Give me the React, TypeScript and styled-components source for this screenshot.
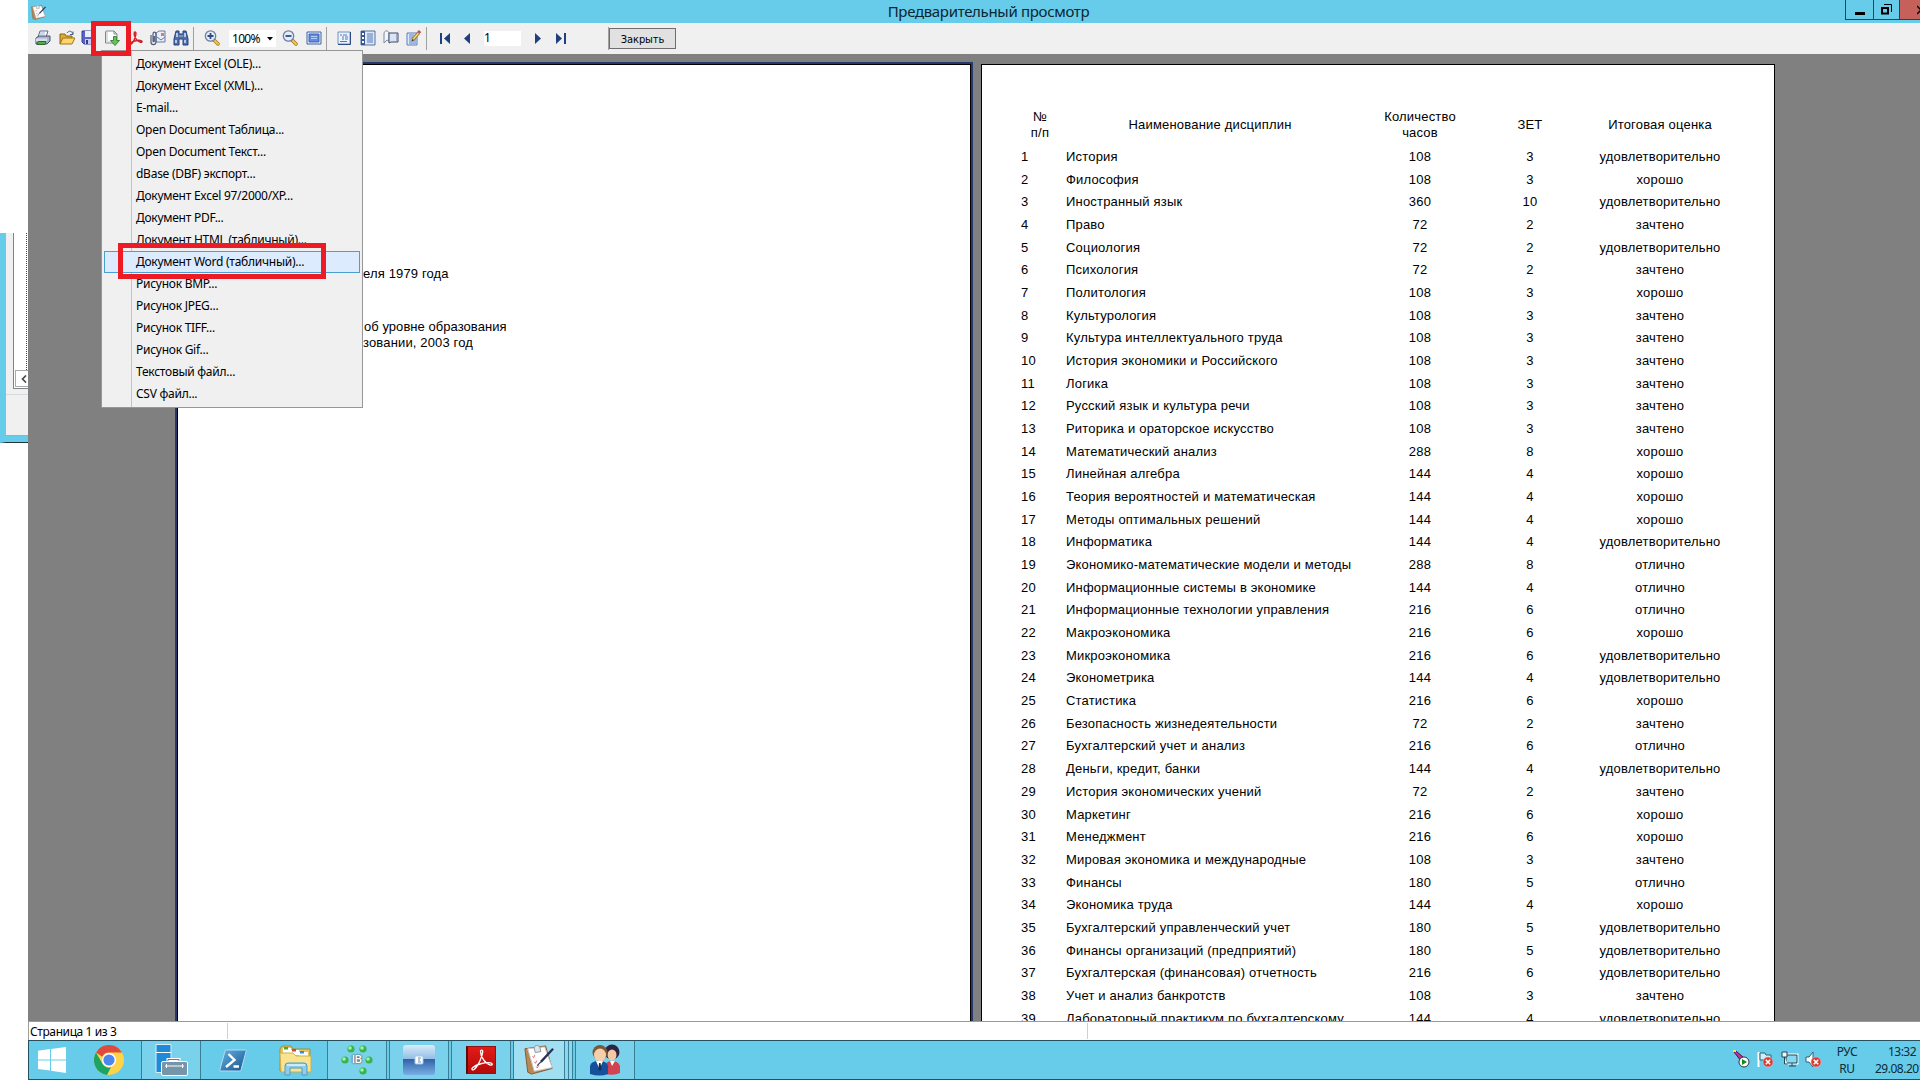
import React from "react";
import styled, { createGlobalStyle } from "styled-components";

const sky = "#67cbea";
const ui = '"Noto Sans", "Open Sans", sans-serif';

const Global = createGlobalStyle`
  * { box-sizing: border-box; }
  html, body { margin: 0; padding: 0; background: #fff; overflow: hidden; }
`;

const Screen = styled.div`
  position: relative;
  display: flex;
  width: 1920px;
  height: 1080px;
  overflow: hidden;
  background: #fff;
  color: #000;
  font-family: ${ui};
`;

/* ---------- sliver of the window behind ---------- */
const BackStrip = styled.div`
  width: 28px;
  padding-top: 233px;
  flex: none;
`;
const BackWindow = styled.div`
  height: 210px;
  border-left: 6px solid ${sky};
  border-bottom: 1px solid #24343c;
  background: #f0f0f0;
  display: flex;
  flex-direction: column;
  overflow: hidden;
`;
const BackList = styled.div`
  height: 156px;
  margin-left: 7px;
  border-left: 1px solid #7f8288;
  border-bottom: 1px solid #7f8288;
  background: #fff;
  display: flex;
  flex-direction: column;
`;
const BackDots = styled.div`
  flex: 1;
  width: 13px;
  border-right: 1px dotted #444;
`;
const BackScroll = styled.div`
  height: 17px;
  margin: 0 0 1px 1px;
  border: 1px solid #aaa;
  border-right: 0;
  display: flex;
  align-items: center;
  justify-content: flex-end;
  padding-right: 1px;
`;
const BackGroup = styled.div`
  height: 6px;
  border-bottom: 1px solid #d5dade;
`;
const BackFooter = styled.div`
  margin-top: auto;
  height: 7px;
  background: ${sky};
  border-top: 1px solid #8fb5c4;
`;

/* ---------- main window ---------- */
const Main = styled.div`
  width: 1892px;
  display: flex;
  flex-direction: column;
`;
const TitleBar = styled.div`
  height: 23px;
  background: ${sky};
  display: flex;
  justify-content: space-between;
`;
const TitleIcon = styled.div`
  width: 90px;
  padding: 3px 0 0 3px;
`;
const Title = styled.div`
  flex: 1;
  padding-left: 14px;
  text-align: center;
  font-size: 15px;
  line-height: 23px;
  letter-spacing: -0.32px;
  color: #0b2630;
`;
const WinButtons = styled.div`
  display: flex;
  width: 75px;
  height: 20px;
`;
const WinButton = styled.div<{ $w: number; $close?: boolean }>`
  width: ${(p) => p.$w}px;
  border: 1px solid #214552;
  border-top: 0;
  border-right: 0;
  background: ${(p) => (p.$close ? "#c6605a" : "transparent")};
  display: flex;
  align-items: center;
  justify-content: ${(p) => (p.$close ? "flex-end" : "center")};
  overflow: hidden;
`;

const Toolbar = styled.div`
  height: 31px;
  padding-left: 2px;
  background: #f0f0f0;
  display: flex;
  align-items: center;
`;
const Tool = styled.div<{ $w: number; $ml?: number }>`
  width: ${(p) => p.$w}px;
  margin-left: ${(p) => p.$ml ?? 0}px;
  height: 31px;
  padding-bottom: 1px;
  display: flex;
  align-items: center;
  justify-content: center;
  flex: none;
`;
const Sep = styled.div<{ $ml?: number }>`
  width: 1px;
  height: 23px;
  margin-left: ${(p) => p.$ml ?? 0}px;
  background: #a0a0a0;
`;
const Combo = styled.div`
  width: 47px;
  height: 17px;
  background: #fff;
  display: flex;
  align-items: center;
  justify-content: space-between;
  padding: 1px 3px 0 3px;
  font-size: 12px;
  line-height: 16px;
  letter-spacing: -0.7px;
`;
const Field = styled.div`
  width: 37px;
  height: 15px;
  margin-left: 6px;
  background: #fff;
  font-size: 12px;
  line-height: 14px;
`;
const CloseButton = styled.div`
  width: 67px;
  height: 21px;
  border: 1px solid #6e6e6e;
  background: #e1e1e1;
  text-align: center;
  font-family: "DejaVu Sans Condensed", "DejaVu Sans", sans-serif;
  font-size: 11px;
  line-height: 21px;
  letter-spacing: -0.1px;
`;

/* ---------- preview area ---------- */
const Canvas = styled.div`
  height: 967px;
  overflow: hidden;
  background: #808080;
  display: flex;
  align-items: flex-start;
  padding: 8px 0 0 147px;
`;
const ActivePage = styled.div`
  width: 798px;
  height: 1130px;
  border: 2px solid #26396b;
  flex: none;
`;
const Paper = styled.div`
  width: 794px;
  height: 1123px;
  border: 1px solid #000;
  background: #fff;
  font-family: "Liberation Sans", Arial, sans-serif;
  font-size: 13px;
  line-height: 16px;
  letter-spacing: 0.3px;
  flex: none;
`;
const FirstPaper = styled(Paper)`
  padding: 201px 0 0 185px;
`;
const Line = styled.div<{ $mb?: number; $ml?: number; $ls?: number }>`
  margin: 0 0 ${(p) => p.$mb ?? 0}px ${(p) => p.$ml ?? 0}px;
  letter-spacing: ${(p) => p.$ls ?? 0.15}px;
  white-space: nowrap;
`;
const SecondPaper = styled(Paper)`
  margin: 2px 0 0 8px;
  padding: 43px 0 0 39px;
`;
const Row = styled.div<{ $head?: boolean }>`
  display: grid;
  grid-template-columns: 38px 302px 118px 102px 158px;
  align-items: center;
  height: ${(p) => (p.$head ? 33 : 22.68)}px;
  margin-bottom: ${(p) => (p.$head ? 4.7 : 0)}px;
  white-space: pre-line;
`;
const Cell = styled.div<{ $left?: boolean; $pad?: number; $ls?: number }>`
  text-align: ${(p) => (p.$left ? "left" : "center")};
  padding-left: ${(p) => p.$pad ?? 0}px;
  letter-spacing: ${(p) => p.$ls ?? 0.19}px;
`;

const StatusBar = styled.div`
  height: 19px;
  border-top: 1px solid #9a9a9a;
  border-left: 1px solid #a0a0a0;
  background: #fff;
  display: flex;
  font-size: 12px;
  line-height: 20px;
`;
const StatusCell = styled.div<{ $w: number }>`
  width: ${(p) => p.$w}px;
  margin: 1px 0 0;
  height: 16px;
  padding-left: 1px;
  line-height: 18px;
  border-right: 1px solid #d0d0d0;
  letter-spacing: -0.4px;
`;

/* ---------- taskbar ---------- */
const Taskbar = styled.div`
  height: 40px;
  border: 1px solid #27505e;
  border-right: 0;
  background: ${sky};
  display: flex;
`;
const Task = styled.div<{ $w: number; $ml?: number; $state?: "open" | "active" }>`
  width: ${(p) => p.$w}px;
  margin-left: ${(p) => p.$ml ?? 0}px;
  display: flex;
  align-items: center;
  justify-content: center;
  border: solid #3c7e94;
  border-width: ${(p) => (p.$state ? "0 1px" : "0")};
  background: ${(p) =>
    p.$state === "active" ? "#a0def2" : p.$state === "open" ? "#79d1ec" : "transparent"};
`;
const Stack = styled.div<{ $w: number }>`
  width: ${(p) => p.$w}px;
  border-right: 1px solid #3c7e94;
  background: #8ad7ef;
`;
const Tray = styled.div`
  margin-left: auto;
  display: flex;
  align-items: center;
  color: #0c2c38;
  font-size: 12px;
`;
const TrayIcon = styled.div`
  width: 24px;
  height: 20px;
`;
const TrayText = styled.div<{ $w: number; $ml?: number; $ls: number }>`
  width: ${(p) => p.$w}px;
  margin-left: ${(p) => p.$ml ?? 0}px;
  line-height: 17px;
  white-space: nowrap;
  text-align: center;
  letter-spacing: ${(p) => p.$ls}px;
  overflow: hidden;
`;
const Clock = styled.div`
  padding-left: 9px;
`;
const DateText = styled.div`
  text-align: left;
`;

/* ---------- overlays ---------- */
const Menu = styled.div`
  position: absolute;
  left: 101px;
  top: 50px;
  width: 262px;
  height: 358px;
  padding: 2px;
  border: 1px solid #979797;
  background: linear-gradient(90deg, transparent 29px, #c4c4c4 29px, #c4c4c4 30px, transparent 30px) #f0f0f0;
`;
const MenuItem = styled.div<{ $on?: boolean }>`
  height: 22px;
  padding-left: 31px;
  border: 1px solid ${(p) => (p.$on ? "#4a9fd0" : "transparent")};
  background: ${(p) => (p.$on ? "#dcebfd" : "transparent")};
  font-size: 12px;
  line-height: 19px;
  letter-spacing: -0.26px;
  white-space: nowrap;
`;
const Mark = styled.div<{ $x: number; $y: number; $w: number; $h: number }>`
  position: absolute;
  left: ${(p) => p.$x}px;
  top: ${(p) => p.$y}px;
  width: ${(p) => p.$w}px;
  height: ${(p) => p.$h}px;
  border: 5px solid #ed1c24;
`;

/* ---------- icons ---------- */
const I = ({ s = 16, h, children }: { s?: number; h?: number; children: React.ReactNode }) => (
  <svg width={s} height={h ?? s} viewBox={`0 0 ${s} ${h ?? s}`}>{children}</svg>
);
const Printer = () => (
  <I><path d="M5 1h8l-2 6H3z" fill="#fff" stroke="#5b6b8c" /><path d="M1 8l3-2h11v5l-3 3H1z" fill="#a9b6cb" stroke="#44526e" /><path d="M1 8.500h11v3H1z" fill="#d8dfea" /><path d="M3 11.500h8l-1 3H2z" fill="#4fae49" stroke="#34672f" /><path d="M5 3h5M4.500 5h5" stroke="#9db0d4" /></I>
);
const Folder = () => (
  <I><path d="M1 14V4h5l1 2h6v3" fill="#e0a935" stroke="#8c6414" /><path d="M1 14l3-6h12l-3 6z" fill="#fbd768" stroke="#9c7420" /><path d="M8 3c2-3 5-2 6 1M14 4.500V1.500M14 4.500h-3" fill="none" stroke="#44628f" /></I>
);
const Floppy = () => (
  <I><path d="M1 1h13v13H3l-2-2z" fill="#5a62c8" stroke="#373c91" /><path d="M4 1h8v6H4z" fill="#e9ecfa" /><path d="M4 9h8v5H4z" fill="#c6cbea" /><path d="M5 10h2v4H5z" fill="#373c91" /></I>
);
const ExportIcon = () => (
  <I><path d="M2 1h8l3 3v9H1.500V2z" fill="#fff" stroke="#7c8796" /><path d="M3 1v10M2 12h8" stroke="#b6bec9" /><path d="M10 1v3h3" fill="none" stroke="#7c8796" /><path d="M9.500 6.500h3v4h3L11 15.500 6.500 10.500h3z" fill="#6cbf5a" stroke="#3d8b3a" /></I>
);
const Pdf = ({ s = 15, c = "#d4232b" }: { s?: number; c?: string }) => (
  <svg width={s} height={s} viewBox="0 0 24 24" fill="none" stroke={c} strokeWidth={s < 20 ? 2.4 : 1.4}>
    <path d="M10.500 2c2-1 2.500 1 1.800 4.500C11 13 7 20 3.500 22c-2 .7-2-1.500 1-3.500 4-2.500 12-4.500 16.500-3 3 1.300 1 3-2 2.200C14 16 9.500 9 10 4z" />
  </svg>
);
const Mail = () => (
  <I><path d="M6 3l3-2h6v11H6z" fill="#e8eef8" stroke="#637ba6" /><path d="M7 7l4 3 4-3" fill="none" stroke="#637ba6" /><path d="M11 3h3v3h-3z" fill="#e17a62" /><path d="M1 5v7c0 3.500 5 3.500 5 0V4c0-2.500-3-2.500-3 0v7c0 1 1.300 1 1.300 0V6" fill="none" stroke="#4c5c7a" strokeWidth="1.200" /></I>
);
const Binoculars = () => (
  <I><path d="M3 1h3v3h4V1h3l2 8v6h-5V9H6v6H1V9z" fill="#4e6ea9" stroke="#27427a" /><path d="M4 3v4M12 3v4M3 10v3M12 10v3" stroke="#dbe6fa" strokeWidth="1.500" /><path d="M6 6h4" stroke="#9fb8e2" /></I>
);
const Lens = ({ plus }: { plus?: boolean }) => (
  <I><path d="M10 10l4 4" stroke="#a87c20" strokeWidth="3.500" strokeLinecap="round" /><path d="M10 10l4 4" stroke="#f0ca54" strokeWidth="1.800" strokeLinecap="round" /><circle cx="6.500" cy="6" r="5.200" fill="#e3edf9" stroke="#6f7f9c" strokeWidth="1.300" /><path d={plus ? "M3.500 6h6M6.500 3v6" : "M3.500 6h6"} stroke="#2f4c86" strokeWidth="1.800" /></I>
);
const FullPage = () => (
  <I><path d="M1 2h14v12H1z" fill="#f2f7ff" stroke="#3e5f9e" /><path d="M3 4h10v8H3z" fill="#5f8ce0" stroke="#3a62b4" /><path d="M5 6.500h6M5 8.500h6" stroke="#b7cff8" /></I>
);
const Outline = () => (
  <I><path d="M2 2h12v12H2z" fill="#eaf2ff" stroke="#7990b8" /><path d="M14.500 2v12.500H2" fill="none" stroke="#2d4b85" /><path d="M4 5h2M7 5h4M6 7h2M9 7h3M6 9h2M9 9h3M4 11.500h7" stroke="#5778b4" /></I>
);
const Thumbs = () => (
  <I><path d="M1 1h14v14H1z" fill="#dbe7fb" stroke="#54719f" /><path d="M1 1h4v14H1z" fill="#36568f" /><path d="M2 3h2v2H2zM2 7h2v2H2zM2 11h2v2H2z" fill="#fff" /><path d="M7 4h6M7 6h6M7 8h6M7 10h6M7 12h6" stroke="#5778b4" /></I>
);
const Book = () => (
  <I><path d="M1 13V4c0-4 4-4 5-1v8l-2-1z" fill="#f4f6fa" stroke="#7c889c" /><path d="M6 3h9v9H8l-2 1z" fill="#dbe4f2" stroke="#3b4b69" /><path d="M14 4v7" stroke="#8799b8" strokeWidth="1.500" /></I>
);
const Edit = () => (
  <I><path d="M1 3h10v12H1z" fill="#dfeafa" stroke="#5f7fb6" /><path d="M3 5h5M3 7h4M3 9h7M3 11h7M3 13h7" stroke="#5b83c8" /><path d="M7 9.500L12.500 3" stroke="#8a6a24" strokeWidth="3.400" /><path d="M7 9.500L12.500 3" stroke="#f2d377" strokeWidth="1.800" /><path d="M12.300 3l1.700-2" stroke="#c44f5f" strokeWidth="3.200" /><path d="M5.500 11.500l1-2.500 1.600 1.300z" fill="#333" /></I>
);
const Arrow = ({ dir, bar }: { dir: "l" | "r"; bar?: boolean }) => (
  <svg width="12" height="11" viewBox="0 0 12 11" fill="#1f3f7d" style={{ transform: dir === "r" ? "scaleX(-1)" : undefined }}>
    {bar && <path d="M1 0h2v11H1z" />}
    <path d={bar ? "M11 0v11L5 5.500z" : "M9 0v11L3 5.500z"} />
  </svg>
);
const Clip = ({ s }: { s: number }) => (
  <svg width={s} height={s} viewBox="0 0 32 32">
    <path d="M1 4l22-3 7 24-22 6-4-2z" fill="#b88855" stroke="#80592f" />
    <path d="M4 4l18-2 8 22-19 4z" fill="#fff" stroke="#c8cbd2" />
    <path d="M11 4c-1-4 5-5 6-1l1 4-6 1z" fill="#dfe5ea" stroke="#87939d" />
    <path d="M9 12l1.200 1.500 1.500-3M11 18l1.200 1.500 1.500-3M13 23l1.200 1.500 1.500-3" fill="none" stroke="#e0666a" strokeWidth="1" />
    <path d="M31 4L18 18" stroke="#263154" strokeWidth="2.400" /><path d="M18 18l-4 4" stroke="#263154" strokeWidth="1.200" />
  </svg>
);
const Windows = () => (
  <svg width="28" height="26" viewBox="0 0 28 26" fill="#fff"><path d="M0 3.700l12-1.600v10.300H0zM13 1.900L28 0v12.400H13zM0 13.400h12v10.200L0 22zM13 13.400h15V26l-15-2.200z" /></svg>
);
const Chrome = () => (
  <svg width="30" height="30" viewBox="0 0 30 30">
    <circle cx="15" cy="15" r="15" fill="#fdd349" />
    <path d="M2 7.500A15 15 0 0 1 28 7.500H15a7.500 7.500 0 0 0-6.800 4.300z" fill="#dd4b3e" />
    <path d="M2 7.500l6.500 11.300a7.500 7.500 0 0 0 8.400 3.500L13 30A15 15 0 0 1 2 7.500z" fill="#1da362" />
    <circle cx="15" cy="15" r="7" fill="#fff" /><circle cx="15" cy="15" r="5.600" fill="#4a87ee" />
  </svg>
);
const Server = () => (
  <svg width="33" height="32" viewBox="0 0 33 32">
    <path d="M1 .5h15v28H1z" fill="#1e8ad8" stroke="#d5effa" /><path d="M1 8.500h15" stroke="#fff" />
    <path d="M13 18v-2.500h11V18" fill="none" stroke="#fff" strokeWidth="3" /><path d="M13 18v-2.500h11V18" fill="none" stroke="#5d7f93" />
    <rect x="6.500" y="17.500" width="26" height="14" rx="1.500" fill="#7795a8" stroke="#fff" /><path d="M10 22h19M11.500 20v4M27.500 20v4" stroke="#fff" />
  </svg>
);
const PowerShell = () => (
  <svg width="28" height="23" viewBox="0 0 28 23">
    <defs><linearGradient id="ps" x1="0" y1="0" x2="1" y2="1"><stop offset="0" stopColor="#67b2e2" /><stop offset="1" stopColor="#14548e" /></linearGradient></defs>
    <path d="M7 1h19.500q1 0 .7 1L22 21q-.3 1-1 1H1.500q-1 0-.7-1L6 2q.3-1 1-1z" fill="url(#ps)" stroke="#b4dcf1" />
    <path d="M9.500 5l6 6-8.500 7M14.500 17.500h5.500" fill="none" stroke="#fff" strokeWidth="2.400" />
  </svg>
);
const Explorer = () => (
  <svg width="34" height="31" viewBox="0 0 34 31">
    <path d="M1 4l2-3h9l2 3h17v22H1z" fill="#e5c55c" stroke="#ab8930" />
    <path d="M4 3h8v5H4z" fill="#fff" /><path d="M5 2h4v2.500H5z" fill="#47a83a" /><path d="M12 5h8v5h-8z" fill="#fff" /><path d="M13 4h4v2.500h-4z" fill="#cf4a35" /><path d="M20 7h9v4h-9z" fill="#fff" /><path d="M21 6h4v2.500h-4z" fill="#3a8ed0" />
    <path d="M1 8h13l3 3h15v16H2z" fill="#f8e38f" stroke="#cfae4d" />
    <path d="M6 30V21q0-3 3-3h16q3 0 3 3v9h-5v-7H11v7z" fill="#8fcdec" stroke="#4f9cc4" /><path d="M8 20h18" stroke="#e1f5fd" strokeWidth="1.500" />
  </svg>
);
const IbBox = styled.div`
  position: relative;
  width: 32px;
  height: 30px;
  display: flex;
  align-items: center;
  justify-content: center;
  font: bold 10px/30px "Liberation Sans", Arial, sans-serif;
  color: #fff;
  text-shadow: 0 0 1px #345, 0 0 2px #345;
  svg { position: absolute; inset: 0; }
`;
const Ib = () => (
  <IbBox>
    <svg width="32" height="30" viewBox="0 0 32 30">
      {[[10, 4], [22, 4], [4, 15], [28, 15], [22, 26]].map(([x, y]) => (
        <g key={`${x}-${y}`}><circle cx={x} cy={y} r="3.600" fill="#35b54a" /><circle cx={x - 1} cy={y - 1} r="1.800" fill="#a5efaa" /></g>
      ))}
    </svg>
    IB
  </IbBox>
);
const Drawer = () => (
  <svg width="32" height="30" viewBox="0 0 32 30">
    <defs>
      <linearGradient id="da" x1="0" y1="0" x2="0" y2="1"><stop offset="0" stopColor="#d9ecfa" /><stop offset="1" stopColor="#92bde4" /></linearGradient>
      <linearGradient id="db" x1="0" y1="0" x2="0" y2="1"><stop offset="0" stopColor="#2f62a8" /><stop offset="1" stopColor="#78aee4" /></linearGradient>
    </defs>
    <path d="M0 14V3q0-3 3-3h26q3 0 3 3v11z" fill="url(#da)" /><path d="M0 14h32v13q0 3-3 3H3q-3 0-3-3z" fill="url(#db)" />
    <rect x="12" y="11" width="8" height="8" rx="1" fill="#fff" stroke="#a8c6e4" /><path d="M15 13h3M15 15h2M15 17h3" stroke="#5d93cd" />
  </svg>
);
const AcroBox = styled.div`
  width: 30px;
  height: 28px;
  border: 1px solid #8f1210;
  border-left: 2px solid #5c0b09;
  background: linear-gradient(#e31b16, #b30b0b);
  display: flex;
  align-items: center;
  justify-content: center;
`;
const Acrobat = () => (
  <svg width="24" height="24" viewBox="0 0 24 24" fill="none" stroke="#fff" strokeWidth="1.300">
    <path d="M10.500 3.500c0-2 2.500-2 2.200.5C12.200 9 8 18.500 4 21.500c-1.500 1-3-.3-1.500-1.800C6 16.500 15 14 20.500 14.800c2.500.4 2.200 2.600 0 2.300C15.500 16 10.500 9 10.500 3.500z" />
  </svg>
);
const Users = () => (
  <svg width="30" height="32" viewBox="0 0 30 32">
    <circle cx="22" cy="8" r="7.500" fill="#2d2440" /><ellipse cx="22" cy="11" rx="4.500" ry="5.500" fill="#f2c9a4" />
    <path d="M15 30V22q1-5 7-5t8 5v7q-6 3-15 1z" fill="#d34250" /><path d="M20 17l2 5 3-5z" fill="#fff" />
    <circle cx="10" cy="8.500" r="7.500" fill="#7a5838" /><ellipse cx="10" cy="11" rx="6" ry="6.500" fill="#f5cfa9" />
    <path d="M0 30v-8q1-5 9-5t9 5v8q-8 3-18 0z" fill="#17509a" /><path d="M6 17l3.500 8 3.500-8z" fill="#fff" /><path d="M9 19l1.500 0 1 6-1.500 2-1.500-2z" fill="#1b2b52" />
  </svg>
);
const Cross = ({ x, y }: { x: number; y: number }) => (
  <g><circle cx={x} cy={y} r="5" fill="#d93a34" stroke="#f4b0aa" strokeWidth=".6" /><path d={`M${x - 2.2} ${y - 2.2}l4.400 4.400M${x + 2.2} ${y - 2.2}l-4.400 4.400`} stroke="#fff" strokeWidth="1.600" /></g>
);

const exportFormats = [
  "Документ Excel (OLE)...", "Документ Excel (XML)...", "E-mail...", "Open Document Таблица...",
  "Open Document Текст...", "dBase (DBF) экспорт...", "Документ Excel 97/2000/XP...", "Документ PDF...",
  "Документ HTML (табличный)...", "Документ Word (табличный)...", "Рисунок BMP...", "Рисунок JPEG...",
  "Рисунок TIFF...", "Рисунок Gif...", "Текстовый файл...", "CSV файл...",
];

const U = "удовлетворительно", X = "хорошо", Z = "зачтено", O = "отлично";
const subjects: [string, number, number, string][] = [
  ["История", 108, 3, U], ["Философия", 108, 3, X], ["Иностранный язык", 360, 10, U], ["Право", 72, 2, Z],
  ["Социология", 72, 2, U], ["Психология", 72, 2, Z], ["Политология", 108, 3, X], ["Культурология", 108, 3, Z],
  ["Культура интеллектуального труда", 108, 3, Z], ["История экономики и Российского", 108, 3, Z],
  ["Логика", 108, 3, Z], ["Русский язык и культура речи", 108, 3, Z], ["Риторика и ораторское искусство", 108, 3, Z],
  ["Математический анализ", 288, 8, X], ["Линейная алгебра", 144, 4, X],
  ["Теория вероятностей и математическая", 144, 4, X], ["Методы оптимальных решений", 144, 4, X],
  ["Информатика", 144, 4, U], ["Экономико-математические модели и методы", 288, 8, O],
  ["Информационные системы в экономике", 144, 4, O], ["Информационные технологии управления", 216, 6, O],
  ["Макроэкономика", 216, 6, X], ["Микроэкономика", 216, 6, U], ["Эконометрика", 144, 4, U],
  ["Статистика", 216, 6, X], ["Безопасность жизнедеятельности", 72, 2, Z], ["Бухгалтерский учет и анализ", 216, 6, O],
  ["Деньги, кредит, банки", 144, 4, U], ["История экономических учений", 72, 2, Z], ["Маркетинг", 216, 6, X],
  ["Менеджмент", 216, 6, X], ["Мировая экономика и международные", 108, 3, Z], ["Финансы", 180, 5, O],
  ["Экономика труда", 144, 4, X], ["Бухгалтерский управленческий учет", 180, 5, U],
  ["Финансы организаций (предприятий)", 180, 5, U], ["Бухгалтерская (финансовая) отчетность", 216, 6, U],
  ["Учет и анализ банкротств", 108, 3, Z], ["Лабораторный практикум по бухгалтерскому", 144, 4, U],
];

export default function App() {
  return (
    <Screen>
      <Global />
      <BackStrip>
        <BackWindow>
          <BackList>
            <BackDots />
            <BackScroll>
              <svg width="6" height="8" viewBox="0 0 6 8"><path d="M5 .5L1.500 4 5 7.500" fill="none" stroke="#444" strokeWidth="1.600" /></svg>
            </BackScroll>
          </BackList>
          <BackGroup />
          <BackFooter />
        </BackWindow>
      </BackStrip>

      <Main>
        <TitleBar>
          <TitleIcon><Clip s={15} /></TitleIcon>
          <Title>Предварительный просмотр</Title>
          <WinButtons>
            <WinButton $w={28}><svg width="10" height="16" viewBox="0 0 10 16"><path d="M0 10h10v3H0z" /></svg></WinButton>
            <WinButton $w={26}>
              <svg width="11" height="11" viewBox="0 0 11 11" fill="none" stroke="#000"><path d="M1 4h6v5.500H1z" strokeWidth="2" /><path d="M3 .5h7.500V8" /></svg>
            </WinButton>
            <WinButton $w={21} $close><svg width="3" height="10" viewBox="0 0 3 10"><path d="M0 1l4 4-4 4" fill="none" stroke="#000" strokeWidth="1.500" /></svg></WinButton>
          </WinButtons>
        </TitleBar>

        <Toolbar>
          <Tool $w={25}><Printer /></Tool>
          <Tool $w={23}><Folder /></Tool>
          <Tool $w={22}><Floppy /></Tool>
          <Tool $w={24}><ExportIcon /></Tool>
          <Tool $w={23}><Pdf /></Tool>
          <Tool $w={22}><Mail /></Tool>
          <Tool $w={23}><Binoculars /></Tool>
          <Sep $ml={1} />
          <Tool $w={35}><Lens plus /></Tool>
          <Combo>100%<svg width="6" height="4" viewBox="0 0 6 4"><path d="M0 0h6L3 3.500z" /></svg></Combo>
          <Tool $w={27}><Lens /></Tool>
          <Tool $w={21}><FullPage /></Tool>
          <Sep $ml={2} />
          <Tool $w={24} $ml={5}><Outline /></Tool>
          <Tool $w={23}><Thumbs /></Tool>
          <Tool $w={24}><Book /></Tool>
          <Tool $w={22}><Edit /></Tool>
          <Sep $ml={1} />
          <Tool $w={22} $ml={7}><Arrow dir="l" bar /></Tool>
          <Tool $w={22}><Arrow dir="l" /></Tool>
          <Field>1</Field>
          <Tool $w={22} $ml={6}><Arrow dir="r" /></Tool>
          <Tool $w={24}><Arrow dir="r" bar /></Tool>
          <Sep $ml={35} />
          <CloseButton>Закрыть</CloseButton>
        </Toolbar>

        <Canvas>
          <ActivePage>
            <FirstPaper>
              <Line $mb={37}>еля 1979 года</Line>
              <Line $ml={1} $ls={0.05}>об уровне образования</Line>
              <Line>зовании, 2003 год</Line>
            </FirstPaper>
          </ActivePage>
          <SecondPaper>
            <Row $head>
              <Cell>{"№\nп/п"}</Cell>
              <Cell>Наименование дисциплин</Cell>
              <Cell>{"Количество\nчасов"}</Cell>
              <Cell>ЗЕТ</Cell>
              <Cell>Итоговая оценка</Cell>
            </Row>
            {subjects.map(([name, hours, zet, grade], i) => (
              <Row key={name}>
                <Cell $left>{i + 1}</Cell>
                <Cell $left $pad={7}>{name}</Cell>
                <Cell>{hours}</Cell>
                <Cell>{zet}</Cell>
                <Cell>{grade}</Cell>
              </Row>
            ))}
          </SecondPaper>
        </Canvas>

        <StatusBar>
          <StatusCell $w={199}>Страница 1 из 3</StatusCell>
          <StatusCell $w={860} />
        </StatusBar>

        <Taskbar>
          <Task $w={46}><Windows /></Task>
          <Task $w={67}><Chrome /></Task>
          <Task $w={60} $state="open" $ml={-1}><Server /></Task>
          <Task $w={64}><PowerShell /></Task>
          <Task $w={62}><Explorer /></Task>
          <Task $w={60} $state="open"><Ib /></Task>
          <Task $w={60} $ml={2} $state="open"><Drawer /></Task>
          <Task $w={60} $ml={2} $state="open"><AcroBox><Acrobat /></AcroBox></Task>
          <Task $w={52} $ml={2} $state="active"><Clip s={30} /></Task>
          <Stack $w={4} />
          <Stack $w={4} />
          <Task $w={60} $ml={2} $state="open"><Users /></Task>
          <Tray>
            <TrayIcon>
              <I s={20}><path d="M1 2l2-1 7 6-2 4z" fill="#c22b9c" stroke="#40203a" /><path d="M0 1l3 0" stroke="#ffe34d" strokeWidth="2" /><circle cx="11" cy="12" r="5" fill="#fff" stroke="#333" /><path d="M9 9v6l5-3z" fill="#118c1b" /></I>
            </TrayIcon>
            <TrayIcon>
              <I s={20}><path d="M1.500 2v15" stroke="#fff" strokeWidth="2" /><path d="M3 3h5l1 2h5v7H9l-1-2H3z" fill="#cdeefa" stroke="#33606f" /><Cross x={11} y={12} /></I>
            </TrayIcon>
            <TrayIcon>
              <I s={20}><path d="M5 5h11v8H5z" fill="#8ad7ef" stroke="#fff" strokeWidth="3" /><path d="M5 5h11v8H5z" fill="#8ad7ef" stroke="#234854" /><path d="M8 16h7M11 13v3" stroke="#234854" /><path d="M1 2h5v5H1zM3.500 7v7h3" fill="#eafaff" stroke="#234854" /></I>
            </TrayIcon>
            <TrayIcon>
              <I s={20}><path d="M1 7h3l4-5v15l-4-5H1z" fill="#fff" stroke="#33606f" /><Cross x={11} y={12} /></I>
            </TrayIcon>
            <TrayText $w={36} $ml={0} $ls={-0.3}><div>РУС</div><div>RU</div></TrayText>
            <TrayText $w={45} $ml={10} $ls={-0.5}>
              <Clock>13:32</Clock>
              <DateText>29.08.2019</DateText>
            </TrayText>
          </Tray>
        </Taskbar>
      </Main>

      <Menu>
        {exportFormats.map((f) => <MenuItem key={f} $on={f.includes("Word")}>{f}</MenuItem>)}
      </Menu>
      <Mark $x={91} $y={21} $w={40} $h={35} />
      <Mark $x={118} $y={243} $w={208} $h={36} />
    </Screen>
  );
}
